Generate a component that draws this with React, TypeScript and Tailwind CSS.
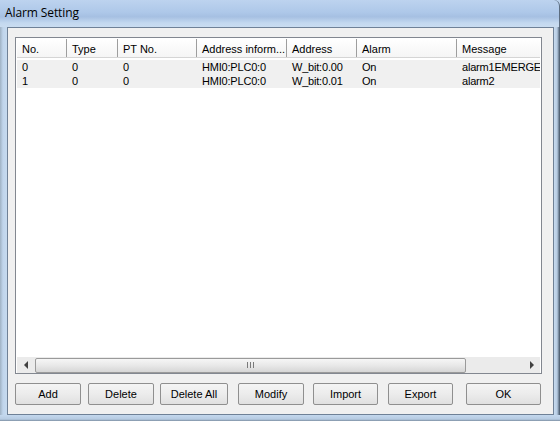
import React from "react";

const columns = [
  { title: "No.", width: 50 },
  { title: "Type", width: 51 },
  { title: "PT No.", width: 79 },
  { title: "Address inform...", width: 90 },
  { title: "Address", width: 70 },
  { title: "Alarm", width: 100 },
  { title: "Message", width: 100 },
];

const rows = [
  ["0", "0", "0", "HMI0:PLC0:0", "W_bit:0.00", "On", "alarm1EMERGE"],
  ["1", "0", "0", "HMI0:PLC0:0", "W_bit:0.01", "On", "alarm2"],
];

const buttons = [
  { label: "Add", cls: "w-[66px]" },
  { label: "Delete", cls: "w-[66px] ml-[7px]" },
  { label: "Delete All", cls: "w-[68px] ml-[6px]" },
  { label: "Modify", cls: "w-[66px] ml-[10px]" },
  { label: "Import", cls: "w-[65px] ml-[9px]" },
  { label: "Export", cls: "w-[65px] ml-[10px]" },
  { label: "OK", cls: "w-[75px] ml-[13px]" },
];

const App = () => {
  return (
    <div className="w-[560px] h-[421px] flex flex-col overflow-hidden bg-[#bcd2ec] font-['Liberation_Sans',Arial,sans-serif] text-[11px] text-black">
      {/* title bar */}
      <div className="h-[27px] shrink-0 flex items-center pl-[5px] pb-[2px] bg-[linear-gradient(180deg,#bdd3ef_0%,#aec8e9_45%,#a6c0e2_62%,#c3d8ef_85%,#c9dcf0_100%)] rounded-tr-[6px] border-r border-[#5c6d80]">
        <span className="text-[12px] text-black font-['Open_Sans','Liberation_Sans',sans-serif] tracking-[-0.1px]">
          Alarm Setting
        </span>
      </div>

      <div className="flex flex-1 min-h-0">
        <div className="w-[7px] shrink-0 bg-[linear-gradient(90deg,#9fb2c4_0px,#c0d5ec_3px,#c6daef_100%)]" />

        {/* client area */}
        <div className="flex-1 flex flex-col border border-[#6f8197] bg-[#f0f0f0] pl-[7px] pt-[9px]">
          {/* list view */}
          <div className="w-[527px] h-[337px] border border-[#828790] bg-white flex flex-col pt-[1px] px-[1px] overflow-hidden">
            <div className="h-[19px] shrink-0 flex border-b border-[#d5d5d5] bg-[linear-gradient(180deg,#ffffff_0%,#f5f5f5_100%)] overflow-hidden">
              {columns.map((c) => (
                <div
                  key={c.title}
                  style={{ width: c.width }}
                  className="shrink-0 h-full flex items-center pl-[5px] pt-[3px] border-r border-[#9e9e9e] whitespace-nowrap overflow-hidden"
                >
                  {c.title}
                </div>
              ))}
            </div>

            <div className="mt-[2px] flex flex-col">
              {rows.map((r, i) => (
                <div key={i} className="h-[14px] flex bg-[#f0f0f0] overflow-hidden">
                  {r.map((cell, j) => (
                    <div
                      key={j}
                      style={{ width: columns[j].width }}
                      className="shrink-0 flex items-center pl-[5px] pt-[1px] whitespace-nowrap overflow-hidden leading-none tracking-[-0.2px]"
                    >
                      {cell}
                    </div>
                  ))}
                </div>
              ))}
            </div>

            <div className="flex-1" />

            {/* horizontal scrollbar */}
            <div className="h-[16px] shrink-0 flex items-center bg-[#ebebeb]">
              <div className="w-[17px] h-full flex items-center justify-center">
                <div className="w-0 h-0 border-y-[4px] border-y-transparent border-r-[4px] border-r-[#404040]" />
              </div>
              <div className="w-[431px] h-[15px] ml-[1px] rounded-[2px] border border-[#9a9a9a] bg-[linear-gradient(180deg,#f6f6f6_0%,#e8e8e8_50%,#d6d6d6_100%)] flex items-center justify-center gap-[2px]">
                <div className="w-[1px] h-[6px] bg-[#7a7a7a]" />
                <div className="w-[1px] h-[6px] bg-[#7a7a7a]" />
                <div className="w-[1px] h-[6px] bg-[#7a7a7a]" />
              </div>
              <div className="flex-1" />
              <div className="w-[17px] h-full flex items-center justify-center">
                <div className="w-0 h-0 border-y-[4px] border-y-transparent border-l-[4px] border-l-[#404040]" />
              </div>
            </div>
          </div>

          {/* buttons */}
          <div className="flex mt-[9px]">
            {buttons.map((b) => (
              <button
                key={b.label}
                className={`${b.cls} h-[22px] shrink-0 flex items-center justify-center border border-[#8f8f8f] rounded-[2px] bg-[linear-gradient(180deg,#f4f4f4_0%,#ececec_50%,#e0e0e0_100%)] text-[11px]`}
              >
                {b.label}
              </button>
            ))}
          </div>
        </div>

        <div className="w-[6px] shrink-0 bg-[linear-gradient(90deg,#c6daef_0px,#b8cde4_3px,#3f5063_100%)]" />
      </div>

      <div className="h-[6px] shrink-0 bg-[linear-gradient(180deg,#c4d8ee_0%,#b6cbe2_70%,#7d8fa2_100%)]" />
    </div>
  );
};

export default App;
